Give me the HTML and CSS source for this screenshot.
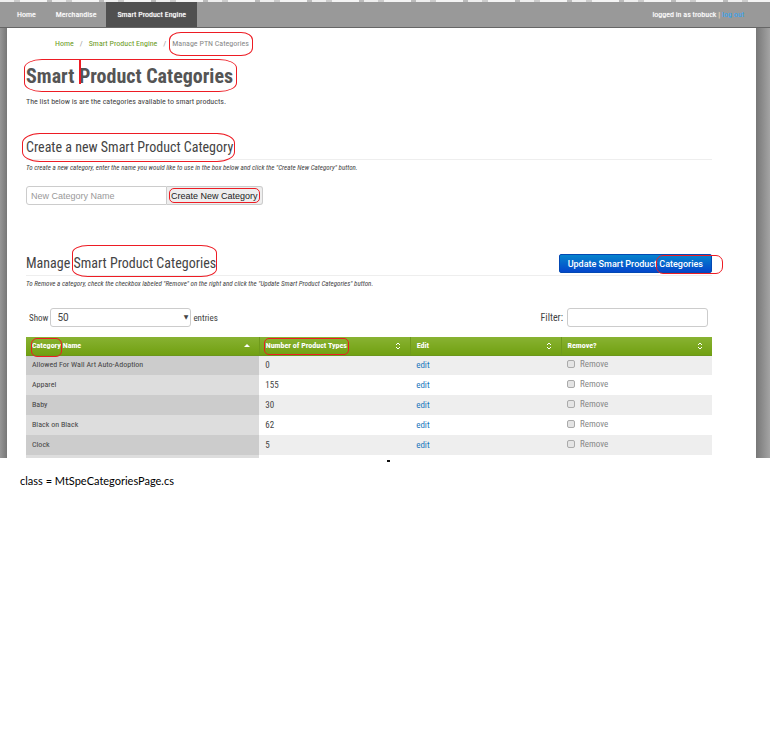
FILE: index.html
```html
<!DOCTYPE html>
<html lang="en">
<head>
<meta charset="utf-8">
<title>Smart Product Categories</title>
<link rel="stylesheet" href="styles.css">
</head>
<body>
<div class="app">
  <nav class="topbar">
    <a href="#">Home</a>
    <a href="#">Merchandise</a>
    <a href="#" class="active">Smart Product Engine</a>
    <div class="user">logged in as trobuck <span class="bar">|</span> <a href="#">log out</a></div>
  </nav>
  <main class="content">
    <div class="crumbs"><a href="#">Home</a><i>/</i><a href="#">Smart Product Engine</a><i>/</i><span class="mark mark-crumb">Manage PTN Categories</span></div>
    <h1><span class="mark mark-title">Smart <span class="caret">Product</span> Categories</span></h1>
    <p class="lead">The list below is are the categories available to smart products.</p>

    <section class="create">
      <div class="section-head"><h2><span class="mark mark-create">Create a new Smart Product Category</span></h2></div>
      <p class="hint">To create a new category, enter the name you would like to use in the box below and click the "Create New Category" button.</p>
      <form class="create-form">
        <input type="text" placeholder="New Category Name" aria-label="New Category Name">
        <button type="button"><span class="mark mark-new">Create New Category</span></button>
      </form>
    </section>

    <section class="manage">
      <div class="section-head">
        <h2>Manage <span class="mark mark-manage">Smart Product Categories</span></h2>
        <button type="button" class="primary">Update Smart Product <span class="mark mark-update">Categories</span></button>
      </div>
      <p class="hint">To Remove a category, check the checkbox labeled "Remove" on the right and click the "Update Smart Product Categories" button.</p>
      <div class="tools">
        <label class="show">Show <span class="select"><select><option>50</option></select></span> entries</label>
        <label class="filter">Filter: <input type="text"></label>
      </div>
      <table>
        <thead>
          <tr>
            <th class="c1"><div><span class="mark mark-category">Category</span>&nbsp;Name<svg class="sort" viewBox="0 0 6 8"><path d="M0 5 3 2 6 5Z" fill="#fff"/></svg></div></th>
            <th class="c2"><div><span class="mark mark-number">Number of Product Types</span><svg class="sort" viewBox="0 0 6 8"><path d="M1 3 3 1 5 3M1 5 3 7 5 5" fill="none" stroke="#fff"/></svg></div></th>
            <th class="c3"><div>Edit<svg class="sort" viewBox="0 0 6 8"><path d="M1 3 3 1 5 3M1 5 3 7 5 5" fill="none" stroke="#fff"/></svg></div></th>
            <th class="c4"><div>Remove?<svg class="sort" viewBox="0 0 6 8"><path d="M1 3 3 1 5 3M1 5 3 7 5 5" fill="none" stroke="#fff"/></svg></div></th>
          </tr>
        </thead>
        <tbody>
          <tr><td>Allowed For Wall Art Auto-Adoption</td><td>0</td><td><a href="#">edit</a></td><td><label><input type="checkbox">Remove</label></td></tr>
          <tr><td>Apparel</td><td>155</td><td><a href="#">edit</a></td><td><label><input type="checkbox">Remove</label></td></tr>
          <tr><td>Baby</td><td>30</td><td><a href="#">edit</a></td><td><label><input type="checkbox">Remove</label></td></tr>
          <tr><td>Black on Black</td><td>62</td><td><a href="#">edit</a></td><td><label><input type="checkbox">Remove</label></td></tr>
          <tr><td>Clock</td><td>5</td><td><a href="#">edit</a></td><td><label><input type="checkbox">Remove</label></td></tr>
          <tr class="cut"><td></td><td></td><td></td><td></td></tr>
        </tbody>
      </table>
    </section>
  </main>
</div>
<div class="speck"></div>
<p class="note">class = MtSpeCategoriesPage.cs</p>
</body>
</html>
```
FILE: styles.css
```css
* { box-sizing: border-box; }
body {
  margin: 0;
  background: #fff;
  color: #444;
  font: 8px/12px "Roboto Condensed", Roboto, sans-serif;
}
h1, h2, p { margin: 0; }
a { text-decoration: none; }
input, select, button { font-family: "Liberation Sans", Arial, sans-serif; margin: 0; }

.app {
  padding: 2px 14px 0 7px;
  background:
    repeating-linear-gradient(90deg, #eee 0 14px, #ccc 14px 20px, #f4f4f4 20px 47px, #bbb 47px 52px) top / 100% 2px no-repeat,
    linear-gradient(90deg, #969696, #777) left / 7px 100% no-repeat,
    linear-gradient(90deg, #777, #a4a4a4) right / 14px 100% no-repeat;
}
.topbar {
  display: flex;
  height: 26px;
  margin: 0 -14px 0 -7px;
  padding: 0 26px 0 7px;
  background: #999;
  border-bottom: 1px solid #666;
  line-height: 25px;
}
.topbar a { padding: 0 10px; color: #fff; text-shadow: 0 0 1px #ddd; }
.topbar .active { padding: 0 11px; background: #505050; }
.user { margin-left: auto; color: #fff; text-shadow: 0 0 1px #ddd; }
.user .bar { color: #e5cf9c; }
.topbar .user a { padding: 0; color: #2aa5f5; text-shadow: none; }

.content { background: #fff; padding: 10px 44px 0 19px; }
.crumbs { padding-left: 29px; color: #888; }
.crumbs a { color: #6b9a1b; }
.crumbs i { margin: 0 6px; font-style: normal; color: #999; }

h1 { margin-top: 14px; font-size: 20px; line-height: 24px; color: #555; }
.lead { margin-top: 8px; }

.create { margin-top: 28px; }
.section-head {
  display: flex;
  justify-content: space-between;
  align-items: flex-start;
  height: 24px;
  border-bottom: 1px solid #eee;
}
h2 { font-size: 14px; line-height: 22px; font-weight: 400; color: #444; }
.hint { margin-top: 2px; font-size: 7px; font-style: italic; }

.create-form { display: flex; margin-top: 12px; }
.create-form input {
  width: 141px;
  height: 19px;
  padding: 0 4px;
  border: 1px solid #ccc;
  border-radius: 3px 0 0 3px;
  font-size: 9px;
}
::placeholder { color: #999; opacity: 1; }
.create-form button {
  height: 19px;
  padding: 0 4px;
  border: 1px solid #ccc;
  border-left: 0;
  border-radius: 0 3px 3px 0;
  background: #eee;
  color: #222;
  font-size: 9px;
}

.manage { margin-top: 47px; }
.primary {
  height: 19px;
  margin-top: 2px;
  padding: 0 8px;
  border: 1px solid #0349b4;
  border-radius: 2px;
  background: linear-gradient(#0684cd, #0446cb);
  color: #fff;
  font: 500 9px/12px Roboto, sans-serif;
}
.tools {
  display: flex;
  justify-content: space-between;
  margin: 18px 4px 10px 3px;
  font-size: 9px;
}
.tools label { display: flex; align-items: center; gap: 2px; }
.select { position: relative; display: flex; }
.select::after {
  content: "▼";
  position: absolute;
  right: 3px;
  top: 3px;
  font: 6px/12px "DejaVu Sans", sans-serif;
}
.tools select, .tools input {
  appearance: none;
  width: 141px;
  height: 19px;
  padding: 0 6px;
  border: 1px solid #ccc;
  border-radius: 3px;
  background: #fff;
  color: #444;
  font: 10px/12px Roboto, sans-serif;
}
.tools .filter { gap: 4px; font-size: 10px; }

table { width: 100%; table-layout: fixed; border-collapse: collapse; }
.c1 { width: 34%; }
.c2, .c3, .c4 { width: 22%; }
th {
  height: 18px;
  padding: 0 9px 0 6px;
  border-right: 1px solid #6f9a1b;
  border-bottom: 1px solid #6b961b;
  background: linear-gradient(#88b232, #71a011);
  color: #fff;
  text-align: left;
  font-weight: 700;
}
th:last-child { border-right: 0; }
th div { display: flex; align-items: center; }
.sort { width: 6px; height: 8px; margin-left: auto; }
td { height: 20px; padding: 0 6px; font-size: 9px; }
td:first-child { background: #ddd; font-size: 8px; }
tr:nth-child(odd) td { background: #eee; }
tr:nth-child(odd) td:first-child { background: #ccc; }
td a { color: #1778bd; }
td label {
  display: flex;
  align-items: center;
  gap: 5px;
  margin-bottom: 2px;
  color: #888;
}
td input {
  appearance: none;
  width: 8px;
  height: 8px;
  border: 1px solid #aaa;
  border-radius: 2px;
  background: #e4e4e4;
}
tr.cut td { height: 3px; padding: 0; background: #fff; }
tr.cut td:first-child { background: #ddd; }

/* Hand-drawn review outlines */
.mark { position: relative; }
.mark::after {
  content: "";
  position: absolute;
  inset: -6px -4px;
  border: 1px solid #ed1c24;
  border-radius: 12px / 8px;
  pointer-events: none;
}
.mark-crumb::after { inset: -7px -4px -8px -3px; }
.mark-title::after { inset: -5px -4px -4px -2px; border-radius: 18px / 9px; }
.mark-create::after { inset: -6px -2px -7px -4px; border-radius: 18px / 10px; }
.mark-new::after { inset: -3px -2px -2px; border-radius: 5px; }
.mark-manage::after { inset: -10px -1px -6px -1px; border-radius: 16px / 8px; }
.mark-update::after { inset: -4px -20px -5px -3px; border-radius: 7px; }
.mark-category::after { inset: -2px -1px -5px; border-radius: 6px; }
.mark-number::after { inset: -2px -2px -3px; border-radius: 5px; }
.caret { position: relative; }
.caret::before {
  content: "";
  position: absolute;
  left: 0;
  top: -4px;
  width: 2px;
  height: 24px;
  background: #ed1c24;
}

.speck { width: 3px; height: 2px; margin: 2px 0 0 387px; background: #111; }
.note {
  margin: 12px 20px;
  color: #000;
  font: 11px/14px Lato, sans-serif;
}
```
